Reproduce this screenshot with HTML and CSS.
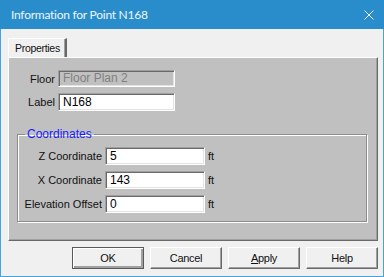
FILE: index.html
```html
<!DOCTYPE html>
<html>
<head>
<meta charset="utf-8">
<link rel="stylesheet" href="styles.css">
</head>
<body>
<div class="window">
  <div class="titlebar">
    <span class="title">Information for Point N168</span>
    <svg class="close" width="10" height="10" viewBox="0 0 10 10"><path d="M0.5 0.5 L9.5 9.5 M9.5 0.5 L0.5 9.5" stroke="#eef5fb" stroke-width="1" fill="none"/></svg>
  </div>
  <div class="client">
    <div class="tabs"><div class="tab">Properties</div></div>
    <div class="panel">
      <div class="top-grid">
        <span class="lbl">Floor</span><div class="field disabled floor">Floor Plan 2</div>
        <span class="lbl">Label</span><div class="field">N168</div>
      </div>
      <fieldset class="group">
        <legend>Coordinates</legend>
        <div class="coord-grid">
          <span class="lbl">Z Coordinate</span><div class="field">5</div><span class="unit">ft</span>
          <span class="lbl">X Coordinate</span><div class="field">143</div><span class="unit">ft</span>
          <span class="lbl">Elevation Offset</span><div class="field">0</div><span class="unit">ft</span>
        </div>
      </fieldset>
    </div>
    <div class="buttons">
      <button class="btn default">OK</button>
      <button class="btn">Cancel</button>
      <button class="btn"><u>A</u>pply</button>
      <button class="btn">Help</button>
    </div>
  </div>
</div>
</body>
</html>
```
FILE: styles.css
```css
html, body {
  margin: 0;
  padding: 0;
  background: #f0f0f0;
}
.window {
  width: 384px;
  height: 277px;
  box-sizing: border-box;
  border: 1px solid #47a3e0;
  border-top: none;
  background: #f0f0f0;
  display: flex;
  flex-direction: column;
}
.titlebar {
  height: 29px;
  background: #2a8dcb;
  margin: 0 -1px;
  display: flex;
  align-items: center;
  justify-content: space-between;
  padding: 0 10px 0 11px;
}
.title {
  font-family: Lato, "Noto Sans", sans-serif;
  font-size: 12px;
  color: #eef5fb;
  letter-spacing: -0.25px;
}
.close {
  display: block;
}
.client {
  flex: 1;
  padding: 9px 5px 0 7px;
  display: flex;
  flex-direction: column;
  font-family: "Liberation Sans", Arial, sans-serif;
  font-size: 11px;
  color: #111;
}
.tabs {
  display: flex;
  height: 19px;
  position: relative;
  z-index: 1;
}
.tab {
  width: 59px;
  height: 19px;
  box-sizing: border-box;
  background: #f0f0f0;
  border-top: 1px solid #ffffff;
  border-left: 1px solid #ffffff;
  border-right: 2px solid #696969;
  box-shadow: inset -1px 0 0 #a0a0a0;
  font-size: 10.5px;
  letter-spacing: -0.3px;
  padding: 3px 0 0 6px;
  color: #111;
}
.panel {
  width: 370px;
  height: 184px;
  box-sizing: border-box;
  background: #c0c0c0;
  border-top: 1px solid #ffffff;
  border-left: 1px solid #ffffff;
  border-right: 1px solid #696969;
  border-bottom: 1px solid #696969;
  box-shadow: inset -1px -1px 0 #a0a0a0;
  padding: 12px 0 0 0;
}
.top-grid {
  display: grid;
  grid-template-columns: 46px 117px;
  grid-template-rows: 17px 18px;
  column-gap: 3px;
  row-gap: 6px;
  align-items: center;
}
.lbl {
  text-align: right;
  white-space: nowrap;
  color: #111;
}
.field {
  height: 18px;
  box-sizing: border-box;
  background: #ffffff;
  border-top: 1px solid #a0a0a0;
  border-left: 1px solid #a0a0a0;
  border-right: 1px solid #ffffff;
  border-bottom: 1px solid #ffffff;
  box-shadow: inset 1px 1px 0 #696969, inset -1px -1px 0 #e3e3e3;
  font-size: 12px;
  line-height: 16px;
  padding-left: 4px;
  color: #000;
}
.field.floor {
  height: 17px;
  line-height: 15px;
}
.field.disabled {
  background: #c0c0c0;
  color: #808080;
}
.group {
  margin: 16px 10px 0 8px;
  padding: 6px 0 0 0;
  height: 95px;
  box-sizing: border-box;
  border: 1px solid #8c8c8c;
  box-shadow: inset 1px 1px 0 #ffffff, 1px 1px 0 #ffffff;
  min-width: 0;
}
.group legend {
  font-size: 12px;
  color: #1a1aff;
  padding: 0 2px;
  margin-left: 7px;
  line-height: 14px;
}
.coord-grid {
  display: grid;
  grid-template-columns: 84px 100px auto;
  grid-auto-rows: 18px;
  column-gap: 3px;
  row-gap: 6px;
  align-items: center;
}
.unit {
  color: #111;
}
.buttons {
  display: flex;
  justify-content: flex-end;
  gap: 6px;
  margin-top: 6px;
  padding-right: 0;
}
.btn {
  width: 72px;
  height: 22px;
  box-sizing: border-box;
  background: #f0f0f0;
  border-top: 1px solid #ffffff;
  border-left: 1px solid #ffffff;
  border-right: 1px solid #696969;
  border-bottom: 1px solid #696969;
  box-shadow: inset -1px -1px 0 #a0a0a0;
  font-family: "Liberation Sans", Arial, sans-serif;
  font-size: 11px;
  letter-spacing: -0.3px;
  color: #111;
  padding: 0;
  margin: 0;
}
.btn.default {
  border: 1px solid #5a5a5a;
  box-shadow: inset 1px 1px 0 #ffffff, inset -2px -2px 0 #a0a0a0;
}
```
